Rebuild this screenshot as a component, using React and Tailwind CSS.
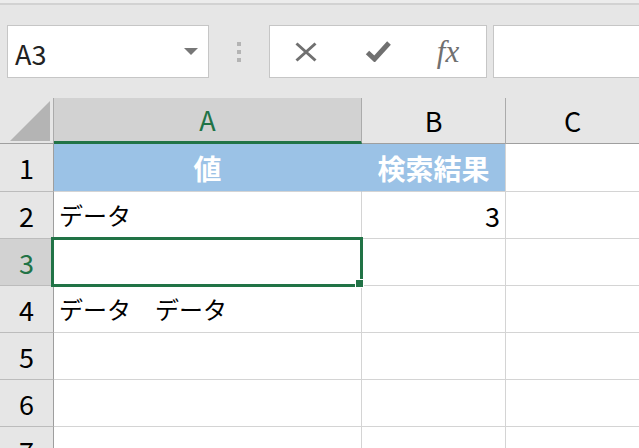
import React from 'react';

// Excel-like sheet: formula bar + grid with A3 selected
const rows = [
  { n: 1, h: 'h-[48px]' },
  { n: 2, h: 'h-[47px]' },
  { n: 3, h: 'h-[47px]' },
  { n: 4, h: 'h-[47px]' },
  { n: 5, h: 'h-[47px]' },
  { n: 6, h: 'h-[47px]' },
  { n: 7, h: 'h-[47px]' },
];

const CellA = ({ n }) => {
  if (n === 1) {
    return (
      <div className="w-[308px] h-full flex items-center justify-center bg-[#9bc2e6] border-r border-r-[#9bc2e6] border-b border-b-[#d4d4d4] text-white font-bold text-[28px] leading-none">
        値
      </div>
    );
  }
  if (n === 3) {
    return (
      <div className="relative w-[308px] h-full bg-white border-r border-b border-[#d4d4d4]">
        <div className="absolute z-10 -left-[3px] -top-[2px] -right-[2px] -bottom-[2px] border-[3px] border-[#217346]">
          <div className="absolute -right-[4px] -bottom-[4px] w-[9px] h-[9px] bg-[#217346] border border-white" />
        </div>
      </div>
    );
  }
  let text = '';
  if (n === 2) text = 'データ';
  if (n === 4) text = 'データ　データ';
  return (
    <div className="w-[308px] h-full flex items-center pl-[5px] bg-white border-r border-b border-[#d4d4d4] text-[24px] leading-none">
      {text}
    </div>
  );
};

const CellB = ({ n }) => {
  if (n === 1) {
    return (
      <div className="w-[144px] h-full flex items-center justify-center bg-[#9bc2e6] border-r border-b border-r-[#d4d4d4] border-b-[#d4d4d4] text-white font-bold text-[28px] leading-none">
        検索結果
      </div>
    );
  }
  return (
    <div className="w-[144px] h-full flex items-center justify-end pr-[5px] bg-white border-r border-b border-[#d4d4d4] text-[27px] leading-none">
      {n === 2 ? '3' : ''}
    </div>
  );
};

export default function App() {
  return (
    <div className="w-[639px] h-[448px] overflow-hidden bg-[#e6e6e6] text-black font-['Noto_Sans_CJK_JP','Noto_Sans',sans-serif]">
      <div className="h-[5px] bg-[#ececec] border-b-2 border-[#d2d2d2]" />

      {/* formula bar */}
      <div className="flex items-stretch h-[53px] mt-[20px]">
        <div className="ml-[7px] w-[202px] flex items-center justify-between pl-[7px] pr-[10px] pt-[3px] bg-white border border-[#c6c6c6] text-[27px] leading-none text-[#222]">
          <span>A3</span>
          <span className="w-0 h-0 border-l-[7px] border-r-[7px] border-t-[7px] border-l-transparent border-r-transparent border-t-[#777] mb-[3px]" />
        </div>
        <div className="ml-[28px] w-[4px] flex flex-col justify-center gap-[4px]">
          <span className="w-[4px] h-[4px] bg-[#b4b4b4]" />
          <span className="w-[4px] h-[4px] bg-[#b4b4b4]" />
          <span className="w-[4px] h-[4px] bg-[#b4b4b4]" />
        </div>
        <div className="ml-[28px] w-[218px] flex items-center bg-white border border-[#c6c6c6]">
          <div className="w-[72px] flex items-center justify-center">
            <svg width="22" height="20" viewBox="0 0 22 20">
              <path d="M1.5 1.5 L20.5 18.5 M20.5 1.5 L1.5 18.5" stroke="#707070" strokeWidth="3" fill="none" />
            </svg>
          </div>
          <div className="w-[72px] flex items-center justify-center">
            <svg width="26" height="21" viewBox="0 0 26 21">
              <path d="M2.5 11.5 L9.5 18 L24 2" stroke="#707070" strokeWidth="5" fill="none" strokeLinejoin="miter" />
            </svg>
          </div>
          <div className="w-[72px] flex items-center justify-center">
            <span className="font-['Liberation_Serif',serif] italic text-[31px] leading-none text-[#707070] pr-[4px]">
              fx
            </span>
          </div>
        </div>
        <div className="ml-[6px] flex-1 bg-white border border-r-0 border-[#c6c6c6]" />
      </div>

      {/* column headers */}
      <div className="mt-[20px] flex h-[46px]">
        <div className="w-[54px] h-full border-r border-b border-r-[#ababab] border-b-[#9f9f9f] flex items-end justify-end pr-[3px] pb-[2px]">
          <svg width="40" height="40" viewBox="0 0 40 40">
            <polygon points="40,0 40,40 0,40" fill="#b4b4b4" />
          </svg>
        </div>
        <div className="w-[308px] h-full flex items-center justify-center bg-[#d2d2d2] border-r border-r-[#ababab] border-b-[3px] border-b-[#217346] text-[#217346] text-[27px] leading-none">
          A
        </div>
        <div className="w-[144px] h-full flex items-center justify-center border-r border-b border-r-[#ababab] border-b-[#9f9f9f] text-[27px] leading-none">
          B
        </div>
        <div className="flex-1 h-full flex items-center justify-center border-b border-[#9f9f9f] text-[27px] leading-none">
          C
        </div>
      </div>

      {/* rows */}
      {rows.map((r) => (
        <div key={r.n} className={`flex ${r.h}`}>
          <div
            className={
              r.n === 3
                ? 'w-[54px] h-full flex items-center justify-center bg-[#d2d2d2] border-r border-b border-r-[#9e9e9e] border-b-[#bcbcbc] text-[#217346] text-[27px] leading-none'
                : 'w-[54px] h-full flex items-center justify-center bg-[#e6e6e6] border-r border-b border-r-[#9e9e9e] border-b-[#bcbcbc] text-[27px] leading-none'
            }
          >
            {r.n}
          </div>
          <CellA n={r.n} />
          <CellB n={r.n} />
          <div className="flex-1 h-full bg-white border-b border-[#d4d4d4]" />
        </div>
      ))}
    </div>
  );
}
